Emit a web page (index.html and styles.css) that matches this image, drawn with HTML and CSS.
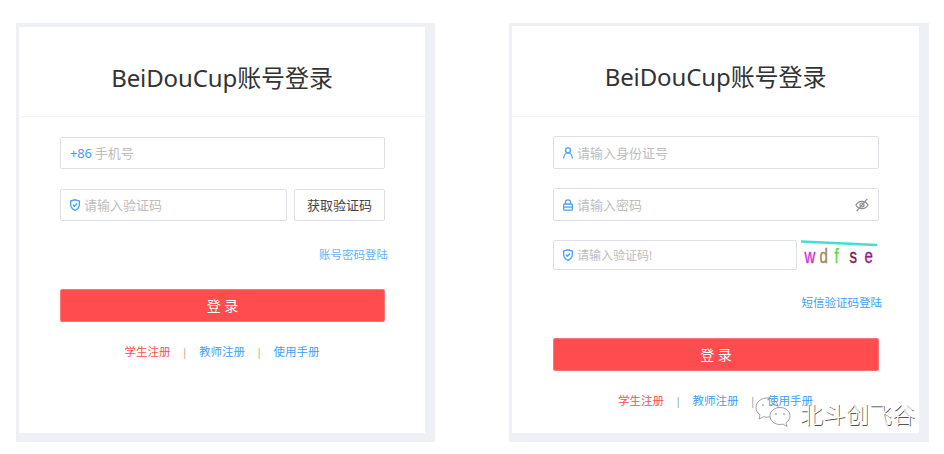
FILE: index.html
```html
<!DOCTYPE html>
<html lang="zh-CN">
<head>
<meta charset="utf-8">
<title>BeiDouCup账号登录</title>
<link rel="stylesheet" href="styles.css">
</head>
<body>
<main class="page">
  <section class="panel panel-sms">
    <h1 class="title">BeiDouCup账号登录</h1>
    <form class="form">
      <label class="field"><span class="prefix">+86</span><input placeholder="手机号"></label>
      <div class="row">
        <label class="field grow">
          <svg class="icon" viewBox="2 1 12 14"><path d="M8 1.700 2.800 3.300v4.300c0 3 2 5.200 5.200 6.800 3.200-1.600 5.200-3.800 5.200-6.800V3.300z"/><path d="m5.500 7.800 1.800 1.800 3.200-3.300"/></svg>
          <input placeholder="请输入验证码">
        </label>
        <button type="button" class="code-btn">获取验证码</button>
      </div>
      <a class="switch" href="#">账号密码登陆</a>
      <button type="button" class="submit">登 录</button>
      <nav class="links">
        <a class="red" href="#">学生注册</a><span class="sep">|</span><a href="#">教师注册</a><span class="sep">|</span><a href="#">使用手册</a>
      </nav>
    </form>
  </section>

  <section class="panel panel-pwd">
    <h1 class="title">BeiDouCup账号登录</h1>
    <form class="form">
      <label class="field">
        <svg class="icon" viewBox="2 1 12 14"><circle cx="8" cy="4.800" r="3"/><path d="M2.800 14.500c0-3.500 2.100-6.600 5.200-6.600s5.200 3.100 5.200 6.600"/></svg>
        <input placeholder="请输入身份证号">
      </label>
      <label class="field">
        <svg class="icon" viewBox="2 1 12 14"><rect x="2.800" y="6.800" width="10.400" height="7.400" rx="1.200"/><path d="M5 6.800V4.800a3 3 0 0 1 6 0v2M2.800 10.500h10.400"/></svg>
        <input placeholder="请输入密码">
        <svg class="eye" viewBox="0 0 16 16"><path d="M1 8c1.800-2.800 4.200-4.200 7-4.200s5.200 1.400 7 4.200c-1.800 2.800-4.200 4.200-7 4.200S2.800 10.800 1 8z"/><circle cx="8" cy="8" r="2.300"/><path d="M2 15 14 1"/></svg>
      </label>
      <div class="row captcha-row">
        <label class="field grow">
          <svg class="icon" viewBox="2 1 12 14"><path d="M8 1.700 2.800 3.300v4.300c0 3 2 5.200 5.200 6.800 3.200-1.600 5.200-3.800 5.200-6.800V3.300z"/><path d="m5.500 7.800 1.800 1.800 3.200-3.300"/></svg>
          <input placeholder="请输入验证码!">
        </label>
        <svg class="captcha" viewBox="0 0 78 30">
          <path class="captcha-line" d="M0 1.500 76 5"/>
          <text class="cw" transform="translate(3.500 23) scale(1 1.35)">w</text>
          <text class="cd" transform="translate(18.500 23) scale(1 1.35)">d</text>
          <text class="cf" transform="translate(33.500 23) scale(1 1.35)">f</text>
          <text class="cs" transform="translate(48.500 23) scale(1 1.35)">s</text>
          <text class="ce" transform="translate(63.500 23) scale(1 1.35)">e</text>
        </svg>
      </div>
      <a class="switch" href="#">短信验证码登陆</a>
      <button type="button" class="submit">登 录</button>
      <nav class="links">
        <a class="red" href="#">学生注册</a><span class="sep">|</span><a href="#">教师注册</a><span class="sep">|</span><a href="#">使用手册</a>
      </nav>
    </form>
  </section>
</main>

<aside class="watermark">
  <svg class="wechat" viewBox="0 0 36 31">
    <path d="M12 1C6 1 1 5 1 10.500c0 3 1.500 5.500 4 7.300L4 22l4.500-2.300c1.200.3 2.300.5 3.500.5 5.800 0 11-3.800 11-9.700C23 5 18 1 12 1z"/>
    <path class="front" d="M25 10.500c-5.500 0-10 3.700-10 8.500s4.500 8.500 10 8.500c1 0 2-.1 3-.4l4 2.400-.9-3.800c2.300-1.600 3.900-4 3.900-6.700 0-4.800-4.500-8.500-10-8.500z"/>
    <circle class="dot" cx="8" cy="8" r=".8"/><circle class="dot" cx="16" cy="8" r=".8"/>
    <circle class="dot" cx="21" cy="17" r=".8"/><circle class="dot" cx="29" cy="17" r=".8"/>
  </svg>
  <span class="wm-text">北斗创飞谷</span>
</aside>
</body>
</html>
```

FILE: styles.css
```css
* { box-sizing: border-box; }

html, body {
  margin: 0;
  height: 100%;
  background: #fff;
  overflow: hidden;
}

body {
  position: relative;
  font-family: "Noto Sans", "Noto Sans CJK SC", sans-serif;
  color: #333;
}

.page {
  display: flex;
  gap: 74px;
  padding: 23px 0 0 16px;
}

.panel {
  height: 419px;
  background: linear-gradient(#fff, #fff) no-repeat;
  background-color: #eff0f5;
  display: flex;
  flex-direction: column;
}

.panel-sms {
  width: 419px;
  background-size: 406px 406px;
  background-position: 3px 4px;
  padding: 4px 10px 9px 3px;
}

.panel-pwd {
  width: 420px;
  background-size: 407px 407px;
  background-position: 3px 3px;
  padding: 3px 10px 9px 3px;
}

.title {
  margin: 0;
  border-bottom: 1px solid #f2f2f4;
  font-size: 24px;
  font-weight: 400;
  line-height: 101px;
  letter-spacing: -.1px;
  text-align: center;
  color: #333;
}

.panel-sms .title { height: 90px; }
.panel-pwd .title { height: 91px; }

.form {
  display: flex;
  flex-direction: column;
  padding: 20px 0 0 41px;
  width: 366px;
}

.panel-pwd .form {
  padding-top: 19px;
  width: 367px;
}

.field {
  display: flex;
  align-items: center;
  height: 32px;
  padding: 0 9px;
  margin-bottom: 20px;
  background: #fff;
  border: 1px solid #dcdfe6;
  border-radius: 2px;
}

.panel-pwd .field {
  height: 33px;
  margin-bottom: 19px;
}

.field input {
  flex: 1;
  min-width: 0;
  border: 0;
  outline: 0;
  padding: 0;
  background: transparent;
  font: 13px "Noto Sans", "Noto Sans CJK SC", sans-serif;
  color: #333;
}

.field input::placeholder {
  color: #bdbdbd;
  opacity: 1;
}

.prefix {
  margin-right: 3px;
  font-size: 13px;
  letter-spacing: -.2px;
  color: #409eff;
}

.icon {
  flex: none;
  width: 10px;
  height: 12px;
  margin-right: 4px;
  fill: none;
  stroke: #4aa3ff;
  stroke-width: 1.600;
}

.eye {
  flex: none;
  width: 14px;
  height: 14px;
  margin-left: auto;
  fill: none;
  stroke: #8a8a8a;
  stroke-width: 1.300;
}

.row {
  display: flex;
  gap: 7px;
}

.grow { flex: 1; min-width: 0; }

.code-btn {
  flex: none;
  width: 91px;
  height: 32px;
  padding: 0 0 1px;
  background: #fff;
  border: 1px solid #dcdfe6;
  border-radius: 2px;
  font: 13px "Noto Sans", "Noto Sans CJK SC", sans-serif;
  color: #444;
}

.switch {
  align-self: flex-end;
  margin: 6px -3px 0 0;
  font-size: 11.500px;
  line-height: 16px;
  color: #66b1ff;
  text-decoration: none;
}

.submit {
  height: 33px;
  margin-top: 26px;
  padding: 0 0 2px;
  background: #ff4d4f;
  border: 1px solid #ff7375;
  border-radius: 2px;
  font: 14px "Noto Sans", "Noto Sans CJK SC", sans-serif;
  color: #fff;
}

.links {
  display: flex;
  justify-content: center;
  align-items: center;
  margin-top: 22px;
  padding-right: 1px;
  font-size: 11.500px;
  line-height: 16px;
}

.links a {
  color: #409eff;
  text-decoration: none;
}

.links a.red { color: #ff4d4f; }

.sep {
  width: 28.500px;
  text-align: center;
  color: #d2a98c;
}

.panel-pwd .sep { color: #98a6ba; }

/* 右侧面板的验证码行 */
.captcha-row { gap: 4px; }

.panel-pwd .captcha-row .field {
  height: 30px;
  margin-bottom: 0;
}

.captcha-row input { font-size: 12px; }

.captcha {
  flex: none;
  width: 78px;
  height: 30px;
}

.captcha text {
  font: 15px "Liberation Sans", sans-serif;
  stroke-width: .3;
}

.captcha-line {
  fill: none;
  stroke: #40e0d0;
  stroke-width: 2.500;
}

.cw { fill: #c832d0; stroke: #c832d0; }
.cd { fill: #a58656; stroke: #a58656; }
.cf { fill: #62d83e; stroke: #62d83e; }
.cs { fill: #7a1850; stroke: #7a1850; }
.ce { fill: #9a1890; stroke: #9a1890; }

.panel-pwd .switch {
  margin-top: 25px;
  color: #409eff;
}

.panel-pwd .submit { margin-top: 27px; }

/* 水印叠加在页面右下角 */
.watermark {
  position: absolute;
  left: 755px;
  top: 397px;
  display: flex;
  align-items: center;
  gap: 9px;
}

.wechat {
  width: 36px;
  height: 31px;
  fill: none;
  stroke: #8a8a8a;
  stroke-width: .8;
}

.wechat .front { fill: #fff; }
.wechat .dot { fill: #777; stroke: none; }

.wm-text {
  font-family: "Noto Sans CJK SC", sans-serif;
  font-size: 23px;
  font-weight: 300;
  line-height: 30px;
  color: #fff;
  text-shadow: .8px .8px 0 #555;
}
```
